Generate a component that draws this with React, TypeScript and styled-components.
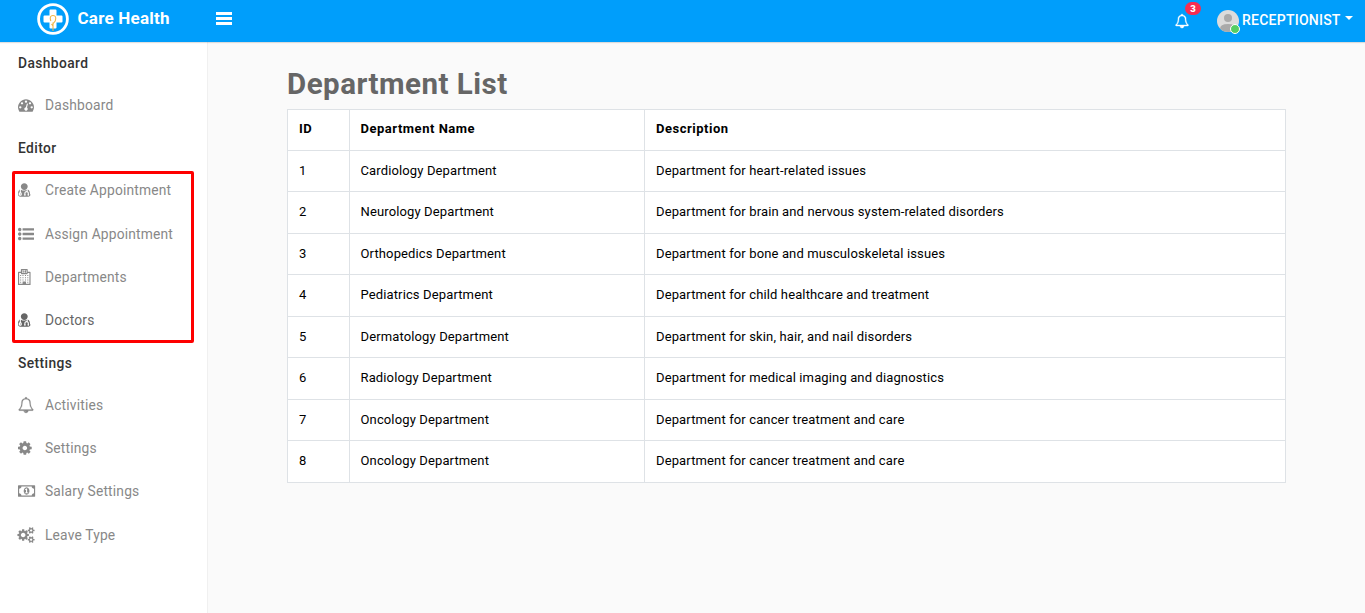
import React from 'react';
import styled, { createGlobalStyle } from 'styled-components';

const Global = createGlobalStyle`
  *, *::after { box-sizing: border-box; }
  body { margin: 0; background: #fafafa; font-family: Roboto, "Liberation Sans", sans-serif; }
`;
const Page = styled.div`height: 613px; display: flex; flex-direction: column; overflow: hidden;`;
const Header = styled.header`
  height: 42px; flex: none; display: flex; align-items: center; background: #009efb; color: #fff;
  position: relative; box-shadow: 0 1px 1px rgba(0, 0, 0, 0.12);
`;
const Brand = styled.div`
  width: 216px; padding: 0 0 4px 37px; display: flex; align-items: center; gap: 8.5px;
  font-size: 17px; font-weight: 700; white-space: nowrap; letter-spacing: 0.22px;
`;
const BrandName = styled.span`margin-bottom: 2px;`;
const Spacer = styled.div`flex: 1;`;
const Burger = styled.button`
  width: 16px; height: 13px; margin: 0 0 5px; padding: 0; border: 0; background: none;
  display: flex; flex-direction: column; justify-content: space-between;
`;
const Bar = styled.span`height: 3px; background: #fff;`;
const Bell = styled.div`position: relative; width: 14px; height: 14px; margin-right: 28px; display: flex;`;
const Badge = styled.span`
  position: absolute; left: 10px; top: -12px; width: 16px; height: 13px; border-radius: 7px;
  background: #f62d51; font-size: 9.5px; font-weight: 900; line-height: 13px; text-align: center;
`;
const User = styled.div`
  display: flex; align-items: center; width: 148px; font-size: 14px; font-weight: 500;
  padding-bottom: 3px; letter-spacing: 0.24px;
`;
const Avatar = styled.div`position: relative; width: 22px; height: 22px; margin: 2px 3px 0 0; flex: none;`;
const Status = styled.span`
  position: absolute; right: -1px; bottom: -2px; width: 10px; height: 10px; border-radius: 50%;
  border: 1px solid #fff; background: #55ce63;
`;
const Caret = styled.span`
  margin: -3px 0 0 4px; border: 4px solid transparent; border-top-color: #fff; border-bottom: 0;
`;
const Body = styled.div`flex: 1; display: flex;`;
const Sidebar = styled.nav`width: 208px; flex: none; background: #fff; border-right: 1px solid #f0f0f0;`;
const Section = styled.div`
  height: 41.5px; padding-left: 18px; font-size: 13.8px; line-height: 42px; font-weight: 500;
  color: #333; letter-spacing: 0.4px;
`;
const Item = styled.a<{ $active?: boolean }>`
  height: 43.25px; padding: 0.5px 0 0 18px; display: flex; align-items: center; font-size: 13.8px;
  color: ${p => (p.$active ? '#666' : '#888')}; letter-spacing: 0.18px;
`;
const IconSlot = styled.span`width: 27px; flex: none; display: flex; align-items: center;`;
const Highlight = styled.div`
  position: relative; margin-top: 0.25px;
  &::after {
    content: ''; position: absolute; left: 12px; top: 2.5px; width: 182px; height: 172px;
    border: 3px solid #fe0000; border-radius: 2px; pointer-events: none;
  }
`;
const Main = styled.main`flex: 1; padding: 25px 79px 0;`;
const Title = styled.h1`
  margin: 0; height: 41.6px; line-height: 35px; font-size: 29.5px; font-weight: 700; color: #666;
  letter-spacing: 0.5px;
`;
const Table = styled.div`width: 999px; background: #fff; border: solid #dee2e6; border-width: 0 1px 1px;`;
const Row = styled.div<{ $head?: boolean }>`
  height: 41.44px; display: grid; grid-template-columns: 61px 295px 641px;
  line-height: ${p => (p.$head ? '37px' : '39px')};
  border-top: 1px solid #dee2e6; font-size: 13px; color: #000;
  font-weight: ${p => (p.$head ? 700 : 400)};
  letter-spacing: ${p => (p.$head ? '0.52px' : '0.13px')};
`;
const Cell = styled.div`
  padding-left: 11px;
  & + & { border-left: 1px solid #dee2e6; padding-left: 10.5px; }
  &:last-child { padding-left: 11px; }
`;

const dot = 'q0-53-37.5-90.5t-90.5-37.5-90.5 37.5-37.5 90.5 37.5 90.5 90.5 37.5 90.5-37.5 37.5-90.5z';
const bullet = 'q0 80-56 136t-136 56-136-56-56-136 56-136 136-56 136 56 56 136z';
const line = 'v192q0 13-9.5 22.5t-22.5 9.5h-1216q-13 0-22.5-9.5t-9.5-22.5v-192q0-13 9.5-22.5t22.5-9.5h1216q13 0 22.5 9.5t9.5 22.5z';
const smallCog = 'v140q0 16-149 31-12 27-30 52 51 113 51 138 0 4-4 7-122 71-124 71-8 0-46-47t-52-68q-20 2-30 2t-30-2q-14 21-52 68t-46 47q-2 0-124-71-4-3-4-7 0-25 51-138-18-25-30-52-149-15-149-31v-140q0-16 149-31 13-29 30-52-51-113-51-138 0-4 4-7 4-2 35-20t59-34 30-16q8 0 46 46.5t52 67.5q20-2 30-2t30 2q51-71 92-112l6-2q4 0 124 70 4 3 4 7 0 25-51 138 17 23 30 52 149 15 149 31z';
const win = (x: number, y: number) => `M${x} ${y}h116v116h-116z`;

const icons = {
  dashboard: { w: 1792, d: `M384 1152${dot}m192-448${dot}m428 481l101-382q6-26-7.5-48.5t-38.5-29.5-48 6.5-30 39.5l-101 382q-60 5-107 43.5t-63 98.5q-20 77 20 146t117 89 146-20 89-117q16-60-6-117t-72-91zm660-33${dot}m-640-640${dot}m448 192${dot}m320 448q0 261-141 483-19 29-54 29h-1402q-35 0-54-29-141-221-141-483 0-182 71-348t191-286 286-191 348-71 348 71 286 191 191 286 71 348z` },
  doctor: { w: 1408, d: 'M384 1344q0 26-19 45t-45 19-45-19-19-45 19-45 45-19 45 19 19 45zm1024 37q0 120-73 189.5t-194 69.5h-874q-121 0-194-69.5t-73-189.5q0-61 4.5-118t19-125.5 37.5-123.5 63.5-103.5 93.5-74.5q-22 53-22 119v203q-58 20-93 70t-35 111q0 80 56 136t136 56 136-56 56-136q0-61-35.5-111t-92.5-70v-203q0-62 25-93 132 104 295 104t295-104q25 31 25 93v64q-106 0-181 75t-75 181v89q-32 29-32 71 0 40 28 68t68 28 68-28 28-68q0-42-32-71v-89q0-52 38-90t90-38 90 38 38 90v89q-32 29-32 71 0 40 28 68t68 28 68-28 28-68q0-42-32-71v-89q0-68-34.5-127.5t-93.5-93.5q0-10 .5-42.5t0-48-2.5-41.5-7-47-13-40q68 15 120 60.5t81 103 47.5 132.5 24 138 5.5 131zm-320-869q0 159-112.5 271.5t-271.5 112.5-271.5-112.5-112.5-271.5 112.5-271.5 271.5-112.5 271.5 112.5 112.5 271.5z' },
  list: { w: 1792, d: `M384 1408${bullet}m0-512${bullet}m1408 416${line}m-1408-928${bullet}m1408 416${line}m0-512${line}` },
  hospital: { w: 1408, d: `M0 1792V384q0-64 64-64h256V64q0-64 64-64h640q64 0 64 64v256h256q64 0 64 64v1408zM128 1664h384v-256h384v256h384V448h-192v32q0 96-96 96H416q-96 0-96-96v-32H128zM448 128v320h512V128zM512 176h112v96h160v-96h112v240h-112v-64h-160v64h-112z${[672, 928, 1184].map(y => [240, 500, 780, 1040].map(x => win(x, y)).join('')).join('')}${win(240, 1420)}${win(1040, 1420)}` },
  bell: { w: 1792, d: 'M912 1696q0-16-16-16-59 0-101.5-42.5t-42.5-101.5q0-16-16-16t-16 16q0 73 51.5 124.5t124.5 51.5q16 0 16-16zm-666-288h1300q-266-300-266-832 0-51-24-105t-69-103-121.5-80.5-169.5-31.5-169.5 31.5-121.5 80.5-69 103-24 105q0 532-266 832zm1482 0q0 52-38 90t-90 38h-448q0 106-75 181t-181 75-181-75-75-181h-448q-52 0-90-38t-38-90q50-42 91-88t85-119.5 74.5-158.5 50-206 19.5-260q0-152 117-282.5t307-158.5q-8-19-8-39 0-40 28-68t68-28 68 28 28 68q0 20-8 39 190 28 307 158.5t117 282.5q0 139 19.5 260t50 206 74.5 158.5 85 119.5 91 88z' },
  cog: { w: 1536, d: 'M1024 896q0-106-75-181t-181-75-181 75-75 181 75 181 181 75 181-75 75-181zm512-109v222q0 12-8 23t-20 13l-185 28q-19 54-39 91 35 50 107 138 10 12 10 25t-9 23q-27 37-99 108t-94 71q-12 0-26-9l-138-108q-44 23-91 38-16 136-29 186-7 28-36 28h-222q-14 0-24.5-8.5t-11.5-21.5l-28-184q-49-16-90-37l-141 107q-10 9-25 9-14 0-25-11-126-114-165-168-7-10-7-23 0-12 8-23 15-21 51-66.5t54-70.5q-27-50-41-99l-183-27q-13-2-21-12.5t-8-23.5v-222q0-12 8-23t19-13l186-28q14-46 39-92-40-57-107-138-10-12-10-24 0-10 9-23 26-36 98.5-107.5t94.5-71.5q13 0 26 10l138 107q44-23 91-38 16-136 29-186 7-28 36-28h222q14 0 24.5 8.5t11.5 21.5l28 184q49 16 90 37l142-107q9-9 24-9 13 0 25 10 129 119 165 170 7 8 7 22 0 12-8 23-15 21-51 66.5t-54 70.5q26 50 41 98l183 28q13 2 21 12.5t8 23.5z' },
  money: { w: 1920, d: 'M768 1152h384v-96h-128v-448h-114l-148 137 77 80q42-37 55-57h2v288h-128v96zm512-256q0 70-21 142t-59.5 134-101.5 101-138 39-138-39-101.5-101-59.5-134-21-142 21-142 59.5-134 101.5-101 138-39 138 39 101.5 101 59.5 134 21 142zm512 256v-512q-106 0-181-75t-75-181h-1152q0 106-75 181t-181 75v512q106 0 181 75t75 181h1152q0-106 75-181t181-75zm128-832v1152q0 26-19 45t-45 19h-1792q-26 0-45-19t-19-45v-1152q0-26 19-45t45-19h1792q26 0 45 19t19 45z' },
  cogs: { w: 1920, d: `M832 896q0-106-75-181t-181-75-181 75-75 181 75 181 181 75 181-75 75-181zm768 512q0-52-38-90t-90-38-90 38-38 90q0 53 37.5 90.5t90.5 37.5 90.5-37.5 37.5-90.5zm0-1024q0-52-38-90t-90-38-90 38-38 90q0 53 37.5 90.5t90.5 37.5 90.5-37.5 37.5-90.5zm-384 421v185q0 10-7 19.5t-16 10.5l-155 24q-11 35-32 76 34 48 90 115 7 11 7 20 0 12-7 19-23 30-82.5 89.5t-78.5 59.5q-11 0-21-7l-115-90q-37 19-77 31-11 108-23 155-7 24-30 24h-186q-11 0-20-7.5t-10-17.5l-23-153q-34-10-75-31l-118 89q-7 7-20 7-11 0-21-8-144-133-144-160 0-9 7-19 10-14 41-53t47-61q-23-44-35-82l-152-24q-10-1-17-9.5t-7-19.5v-185q0-10 7-19.5t16-10.5l155-24q11-35 32-76-34-48-90-115-7-11-7-20 0-12 7-20 22-30 82-89t79-59q11 0 21 7l115 90q34-18 77-32 11-108 23-154 7-24 30-24h186q11 0 20 7.5t10 17.5l23 153q34 10 75 31l118-89q8-7 20-7 11 0 21 8 144 133 144 160 0 8-7 19-12 16-42 54t-45 60q23 48 34 82l152 23q10 2 17 10.5t7 19.5zm640 533${smallCog}m0-1024${smallCog}` },
};
type IconName = keyof typeof icons;

const Icon = ({ name, size = 16, stroke = 0 }: { name: IconName; size?: number; stroke?: number }) => (
  <svg
    width={(icons[name].w / 1792) * size}
    height={size}
    viewBox={`0 0 ${icons[name].w} 1792`}
    fill="currentColor"
    stroke="currentColor"
    strokeWidth={stroke}
    overflow="visible"
  >
    <path d={icons[name].d} fillRule={name === 'hospital' ? 'evenodd' : 'nonzero'} />
  </svg>
);

const Logo = () => (
  <svg width="32" height="32" viewBox="0 0 32 32">
    <circle cx="16" cy="16" r="14.4" fill="none" stroke="#fff" strokeWidth="2.8" />
    <path d="M13.5 6.5h5q1 0 1 1v5h5q1 0 1 1v5q0 1-1 1h-5v5q0 1-1 1h-5q-1 0-1-1v-5h-5q-1 0-1-1v-5q0-1 1-1h5v-5q0-1 1-1z" fill="#fff" />
    <path d="M16 28V19.5M13.8 18q-1.8-5.5 2.2-5.5t2.2 5.5l-2 2.5M14.5 21l1.5 2" fill="none" stroke="#f2b544" strokeWidth="1.1" />
  </svg>
);

const NavItem = ({ icon, label, active }: { icon: IconName; label: string; active?: boolean }) => (
  <Item $active={active}>
    <IconSlot><Icon name={icon} stroke={icon === 'bell' ? 20 : 0} /></IconSlot>
    {label}
  </Item>
);

const departments = [
  ['Cardiology Department', 'Department for heart-related issues'],
  ['Neurology Department', 'Department for brain and nervous system-related disorders'],
  ['Orthopedics Department', 'Department for bone and musculoskeletal issues'],
  ['Pediatrics Department', 'Department for child healthcare and treatment'],
  ['Dermatology Department', 'Department for skin, hair, and nail disorders'],
  ['Radiology Department', 'Department for medical imaging and diagnostics'],
  ['Oncology Department', 'Department for cancer treatment and care'],
  ['Oncology Department', 'Department for cancer treatment and care'],
];

export default function App() {
  return (
    <Page>
      <Global />
      <Header>
        <Brand><Logo /><BrandName>Care Health</BrandName></Brand>
        <Burger aria-label="Menu"><Bar /><Bar /><Bar /></Burger>
        <Spacer />
        <Bell><Icon name="bell" size={14} stroke={50} /><Badge>3</Badge></Bell>
        <User>
          <Avatar>
            <svg width="22" height="22" viewBox="0 0 22 22">
              <defs><clipPath id="face"><circle cx="11" cy="11" r="11" /></clipPath></defs>
              <g clipPath="url(#face)">
                <rect width="22" height="22" fill="#dcdcdc" />
                <circle cx="11" cy="8" r="4" fill="#aaa" />
                <path d="M3 22v-3q0-5 8-5t8 5v3z" fill="#aaa" />
              </g>
            </svg>
            <Status />
          </Avatar>
          RECEPTIONIST
          <Caret />
        </User>
      </Header>
      <Body>
        <Sidebar>
          <Section>Dashboard</Section>
          <NavItem icon="dashboard" label="Dashboard" />
          <Section>Editor</Section>
          <Highlight>
            <NavItem icon="doctor" label="Create Appointment" />
            <NavItem icon="list" label="Assign Appointment" />
            <NavItem icon="hospital" label="Departments" />
            <NavItem icon="doctor" label="Doctors" active />
          </Highlight>
          <Section>Settings</Section>
          <NavItem icon="bell" label="Activities" />
          <NavItem icon="cog" label="Settings" />
          <NavItem icon="money" label="Salary Settings" />
          <NavItem icon="cogs" label="Leave Type" />
        </Sidebar>
        <Main>
          <Title>Department List</Title>
          <Table>
            <Row $head><Cell>ID</Cell><Cell>Department Name</Cell><Cell>Description</Cell></Row>
            {departments.map(([name, description], i) => (
              <Row key={i}><Cell>{i + 1}</Cell><Cell>{name}</Cell><Cell>{description}</Cell></Row>
            ))}
          </Table>
        </Main>
      </Body>
    </Page>
  );
}
